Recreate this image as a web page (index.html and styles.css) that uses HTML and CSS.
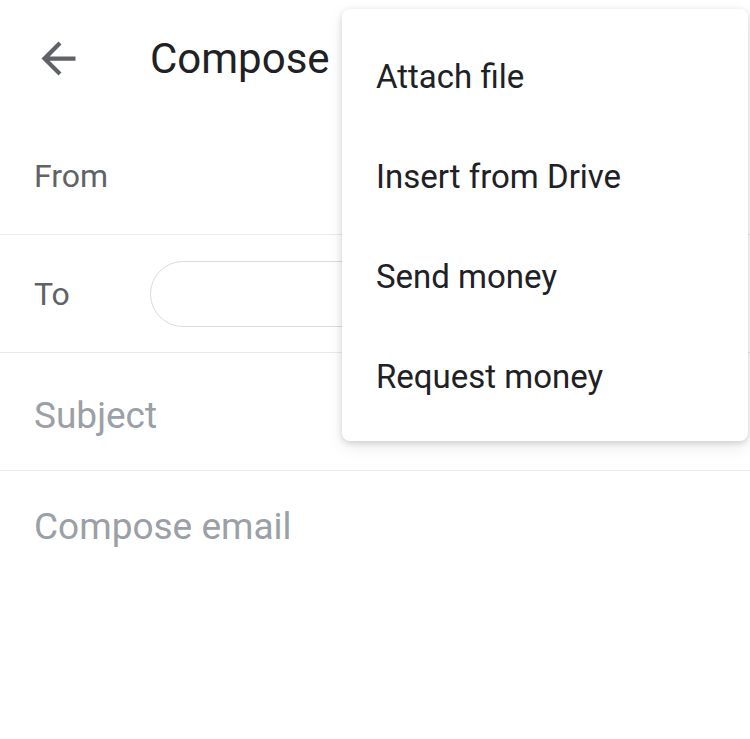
FILE: index.html
```html
<!DOCTYPE html>
<html lang="en">
<head>
    <meta charset="UTF-8">
    <meta name="viewport" content="width=device-width, initial-scale=1.0">
    <title>Compose</title>
    <link rel="stylesheet" href="styles.css">
</head>
<body>
    <div class="screen">
        <header class="top-bar">
            <button class="back-btn" aria-label="Back">
                <svg viewBox="0 0 24 24" width="51" height="51">
                    <path d="M20 11H7.83l5.59-5.59L12 4l-8 8 8 8 1.41-1.41L7.83 13H20v-2z"/>
                </svg>
            </button>
            <h1 class="title">Compose</h1>
        </header>

        <div class="field-row">
            <span class="field-label">From</span>
        </div>
        <div class="field-row">
            <span class="field-label">To</span>
            <div class="to-input"></div>
        </div>
        <div class="field-row subject-row">
            <span class="placeholder">Subject</span>
        </div>
        <div class="body-area">
            <span class="placeholder">Compose email</span>
        </div>

        <ul class="overflow-menu">
            <li>Attach file</li>
            <li>Insert from Drive</li>
            <li>Send money</li>
            <li>Request money</li>
        </ul>
    </div>
</body>
</html>
```

FILE: styles.css
```css
body {
    margin: 0;
    font-family: Roboto, "Liberation Sans", Arial, sans-serif;
    background: #fff;
    color: #202124;
}
.screen {
    position: relative;
    width: 750px;
    height: 739px;
    overflow: hidden;
}
.top-bar {
    display: flex;
    align-items: center;
    height: 117px;
    padding-left: 33px;
}
.back-btn {
    background: none;
    border: none;
    padding: 0;
    width: 51px;
    height: 51px;
    margin-top: -1px;
    fill: #5f6368;
}
.back-btn svg {
    display: block;
}
.title {
    margin: 0 0 0 66px;
    font-size: 42px;
    font-weight: 400;
    color: #202124;
}
.field-row {
    display: flex;
    align-items: center;
    height: 117px;
    padding: 0 34px;
    border-bottom: 1px solid #e8eaed;
}
.subject-row {
    box-sizing: border-box;
    height: 118px;
    padding-top: 8px;
}
.field-label {
    width: 116px;
    font-size: 32px;
    color: #5f6368;
}
.to-input {
    flex: 1;
    height: 64px;
    border: 1.5px solid #dadce0;
    border-radius: 34px;
}
.placeholder {
    font-size: 37px;
    color: #9aa0a6;
}
.body-area {
    padding: 34px 34px 0;
}
.overflow-menu {
    position: absolute;
    top: 9px;
    left: 342px;
    width: 406px;
    margin: 0;
    padding: 18px 0 14px;
    list-style: none;
    background: #fff;
    border-radius: 8px;
    box-shadow: 0 2px 6px rgba(0,0,0,0.15), 0 6px 18px rgba(0,0,0,0.08);
}
.overflow-menu li {
    height: 100px;
    line-height: 100px;
    padding-left: 34px;
    font-size: 33px;
    color: #202124;
}
```
